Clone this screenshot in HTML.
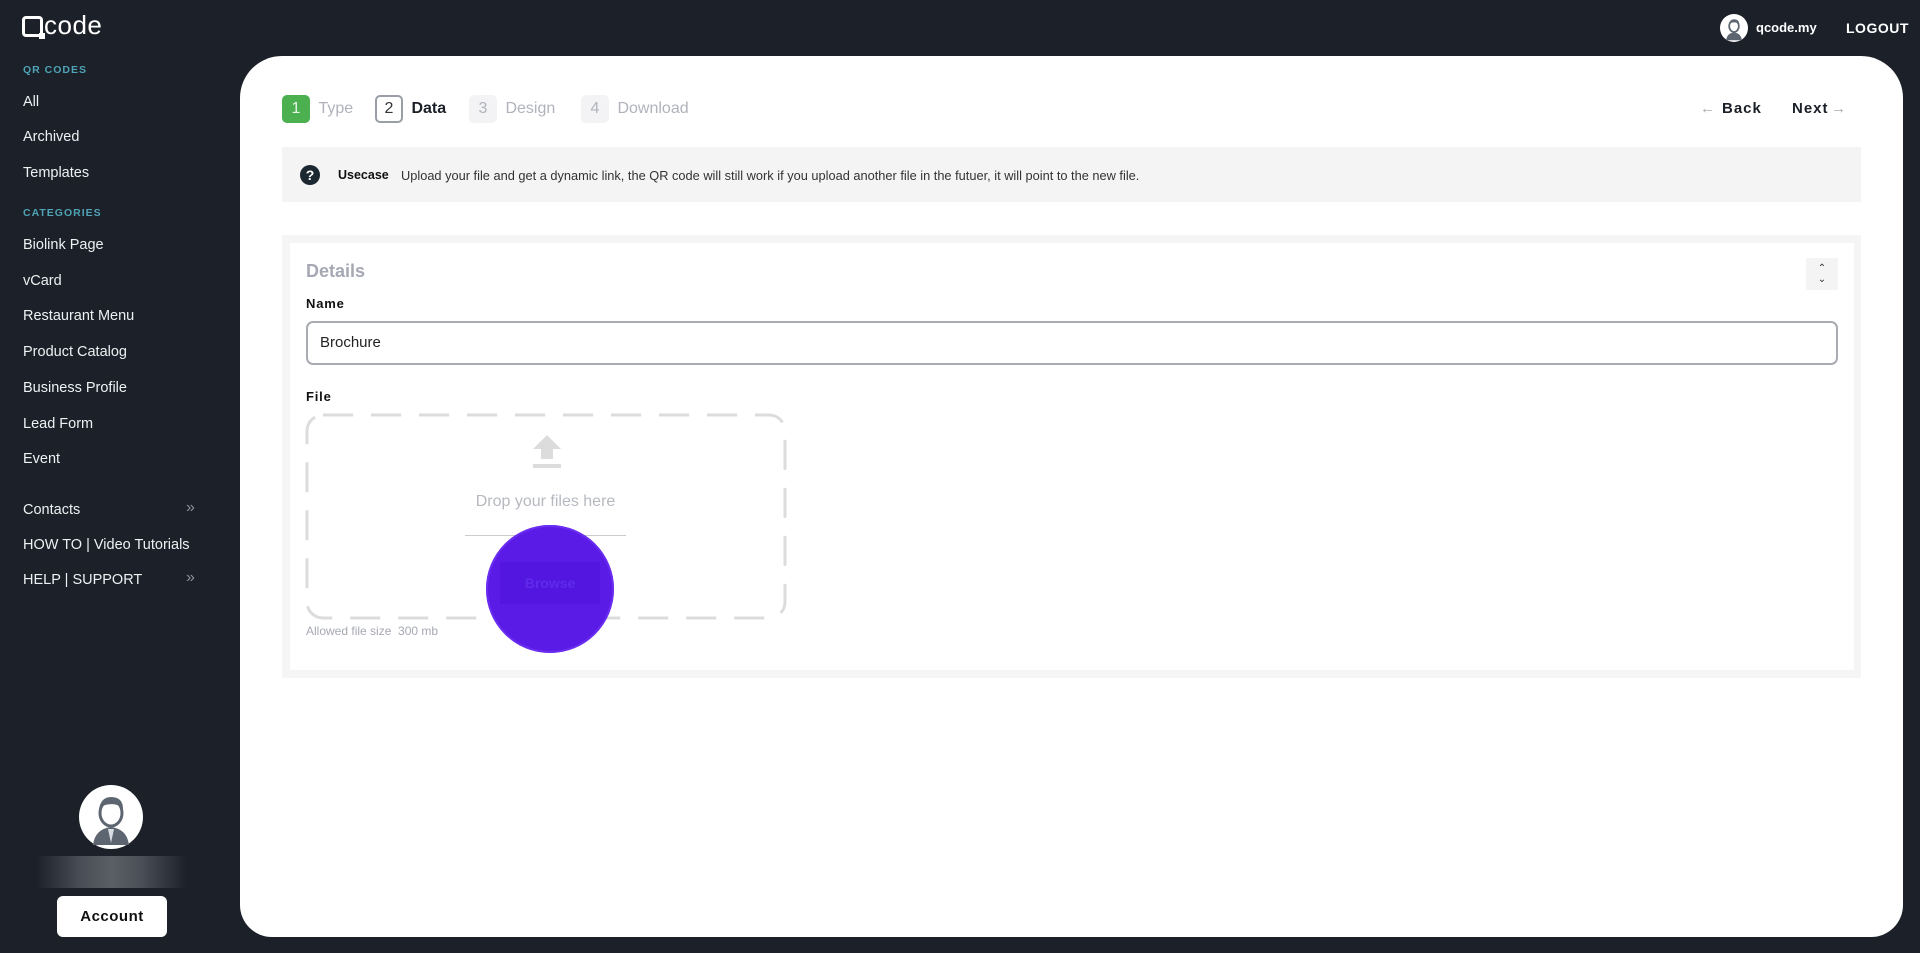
<!DOCTYPE html>
<html><head><meta charset="utf-8"><style>
*{margin:0;padding:0;box-sizing:border-box}
body{width:1920px;height:953px;background:#1b2029;font-family:"Liberation Sans",sans-serif;position:relative;overflow:hidden}
.a{position:absolute}
.side{color:#eef0f2;font-size:14.5px}
.cat{color:#4fa3b5;font-size:10.5px;font-weight:bold;letter-spacing:1px}
.panel{left:240px;top:56px;width:1663px;height:881px;background:#fff;border-radius:42px 42px 32px 32px}
.step{font-size:16px;color:#b0b3bb}
.box{display:inline-block;width:28px;height:28px;border-radius:5px;text-align:center;line-height:28px;font-size:16px}
</style></head><body>
<!-- logo -->
<div class="a" style="left:22px;top:16px;width:21px;height:21px;border:3px solid #fff;border-radius:4px"></div>
<div class="a" style="left:39px;top:33px;width:6px;height:6px;background:#fff"></div>
<div class="a" style="left:44px;top:10px;color:#fff;font-size:26px;letter-spacing:0.5px">code</div>

<div class="a cat" style="left:23px;top:64px">QR CODES</div>
<div class="a side" style="left:23px;top:94px">All</div>
<div class="a side" style="left:23px;top:129px">Archived</div>
<div class="a side" style="left:23px;top:165px">Templates</div>
<div class="a cat" style="left:23px;top:207px">CATEGORIES</div>
<div class="a side" style="left:23px;top:237px">Biolink Page</div>
<div class="a side" style="left:23px;top:273px">vCard</div>
<div class="a side" style="left:23px;top:308px">Restaurant Menu</div>
<div class="a side" style="left:23px;top:344px">Product Catalog</div>
<div class="a side" style="left:23px;top:380px">Business Profile</div>
<div class="a side" style="left:23px;top:416px">Lead Form</div>
<div class="a side" style="left:23px;top:451px">Event</div>
<div class="a side" style="left:23px;top:502px">Contacts</div>
<div class="a side" style="left:23px;top:537px">HOW TO | Video Tutorials</div>
<div class="a side" style="left:23px;top:572px">HELP | SUPPORT</div>
<div class="a" style="left:186px;top:499px;color:#8a8f98;font-size:16px">»</div>
<div class="a" style="left:186px;top:569px;color:#8a8f98;font-size:16px">»</div>

<!-- avatar -->
<svg class="a" style="left:79px;top:785px" width="64" height="64" viewBox="0 0 64 64"><circle cx="32" cy="32" r="32" fill="#fff"/><path d="M14 60 Q16 44 32 42 Q48 44 50 60 Z" fill="#5d6670"/><path d="M29 44 L32 58 L35 44Z" fill="#d7dde3"/><ellipse cx="32" cy="28" rx="11" ry="13" fill="#fff" stroke="#5d6670" stroke-width="3"/><path d="M20 24 Q22 12 32 12 Q44 12 44 24 Q38 17 26 20Z" fill="#5d6670"/></svg>
<div class="a" style="left:36px;top:856px;width:151px;height:32px;background:linear-gradient(90deg,#1b2029,#4a4f57 30%,#5a5f66 50%,#4a4f57 70%,#1b2029)"></div>
<div class="a" style="left:57px;top:896px;width:110px;height:41px;background:#fff;border-radius:6px;text-align:center;line-height:41px;font-weight:bold;font-size:15px;color:#111;letter-spacing:0.5px">Account</div>

<!-- top right -->
<svg class="a" style="left:1720px;top:14px" width="28" height="28" viewBox="0 0 64 64"><circle cx="32" cy="32" r="32" fill="#fff"/><path d="M14 60 Q16 44 32 42 Q48 44 50 60 Z" fill="#5d6670"/><ellipse cx="32" cy="28" rx="11" ry="13" fill="#fff" stroke="#5d6670" stroke-width="4"/><path d="M20 24 Q22 12 32 12 Q44 12 44 24 Q38 17 26 20Z" fill="#5d6670"/></svg>
<div class="a" style="left:1756px;top:20px;color:#fff;font-weight:bold;font-size:13px">qcode.my</div>
<div class="a" style="left:1846px;top:20px;color:#fff;font-weight:bold;font-size:14px;letter-spacing:0.5px">LOGOUT</div>

<div class="a panel"></div>
<!-- steps -->
<div class="a step" style="left:282px;top:95px"><span class="box" style="background:#4caf50;color:#e9f6ea">1</span> <span style="margin-left:4px">Type</span></div>
<div class="a step" style="left:375px;top:95px"><span class="box" style="border:2px solid #9a9ea7;color:#333;line-height:24px">2</span> <span style="margin-left:4px;color:#1b1f27;font-weight:bold">Data</span></div>
<div class="a step" style="left:469px;top:95px"><span class="box" style="background:#f3f3f5;color:#b0b3bb">3</span> <span style="margin-left:4px">Design</span></div>
<div class="a step" style="left:581px;top:95px"><span class="box" style="background:#f3f3f5;color:#b0b3bb">4</span> <span style="margin-left:4px">Download</span></div>
<div class="a" style="left:1700px;top:100px;color:#aaa;font-size:15px">←</div>
<div class="a" style="left:1722px;top:100px;color:#1b1f27;font-weight:bold;font-size:15px;letter-spacing:1px">Back</div>
<div class="a" style="left:1792px;top:100px;color:#1b1f27;font-weight:bold;font-size:15px;letter-spacing:1px">Next</div>
<div class="a" style="left:1831px;top:100px;color:#aaa;font-size:15px">→</div>

<!-- usecase -->
<div class="a" style="left:282px;top:147px;width:1579px;height:55px;background:#f4f4f4"></div>
<div class="a" style="left:300px;top:165px;width:20px;height:20px;border-radius:50%;background:#1b2731;color:#fff;font-weight:bold;font-size:14px;text-align:center;line-height:20px">?</div>
<div class="a" style="left:338px;top:168px;font-size:12.5px;font-weight:bold;color:#111">Usecase</div>
<div class="a" style="left:401px;top:168px;font-size:12.8px;color:#333">Upload your file and get a dynamic link, the QR code will still work if you upload another file in the futuer, it will point to the new file.</div>

<!-- details card -->
<div class="a" style="left:282px;top:235px;width:1579px;height:443px;background:#f5f5f5"></div>
<div class="a" style="left:290px;top:243px;width:1564px;height:427px;background:#fff"></div>
<div class="a" style="left:306px;top:261px;font-size:18px;font-weight:bold;color:#a6a9b3">Details</div>
<div class="a" style="left:1806px;top:258px;width:32px;height:32px;background:#f4f4f4;text-align:center;color:#333;font-size:10px;line-height:11px;padding-top:5px">⌃<br>⌄</div>
<div class="a" style="left:306px;top:296px;font-size:13px;font-weight:bold;color:#111;letter-spacing:0.8px">Name</div>
<div class="a" style="left:306px;top:321px;width:1532px;height:44px;border:2px solid #a9abb2;border-radius:7px;padding-left:12px;line-height:40px;font-size:15px;color:#222">Brochure</div>
<div class="a" style="left:306px;top:389px;font-size:13px;font-weight:bold;color:#111;letter-spacing:0.8px">File</div>
<svg class="a" style="left:305px;top:413px" width="482" height="207"><rect x="2" y="2" width="478" height="203" rx="16" fill="none" stroke="#dcdcdc" stroke-width="3" stroke-dasharray="30 18"/></svg>
<svg class="a" style="left:532px;top:435px" width="30" height="34" viewBox="0 0 30 34"><path d="M15 0 L29 14 L21 14 L21 24 L9 24 L9 14 L1 14Z" fill="#dcdcdc"/><rect x="1" y="29" width="28" height="4" fill="#dcdcdc"/></svg>
<div class="a" style="left:306px;top:493px;width:479px;text-align:center;font-size:16px;color:#b7b9c0">Drop your files here</div>
<div class="a" style="left:465px;top:535px;width:161px;height:1px;background:#ccc"></div>
<div class="a" style="left:486px;top:525px;width:128px;height:128px;border-radius:50%;background:#5a1be6;box-shadow:0 0 0 2px #6a2cf0 inset"></div>
<div class="a" style="left:500px;top:562px;width:100px;height:42px;background:#5316e0;text-align:center;line-height:42px;color:#5f2aea;font-weight:bold;font-size:14px">Browse</div>
<div class="a" style="left:306px;top:624px;font-size:12px;color:#a6a9b3">Allowed file size&nbsp; 300 mb</div>
</body></html>
